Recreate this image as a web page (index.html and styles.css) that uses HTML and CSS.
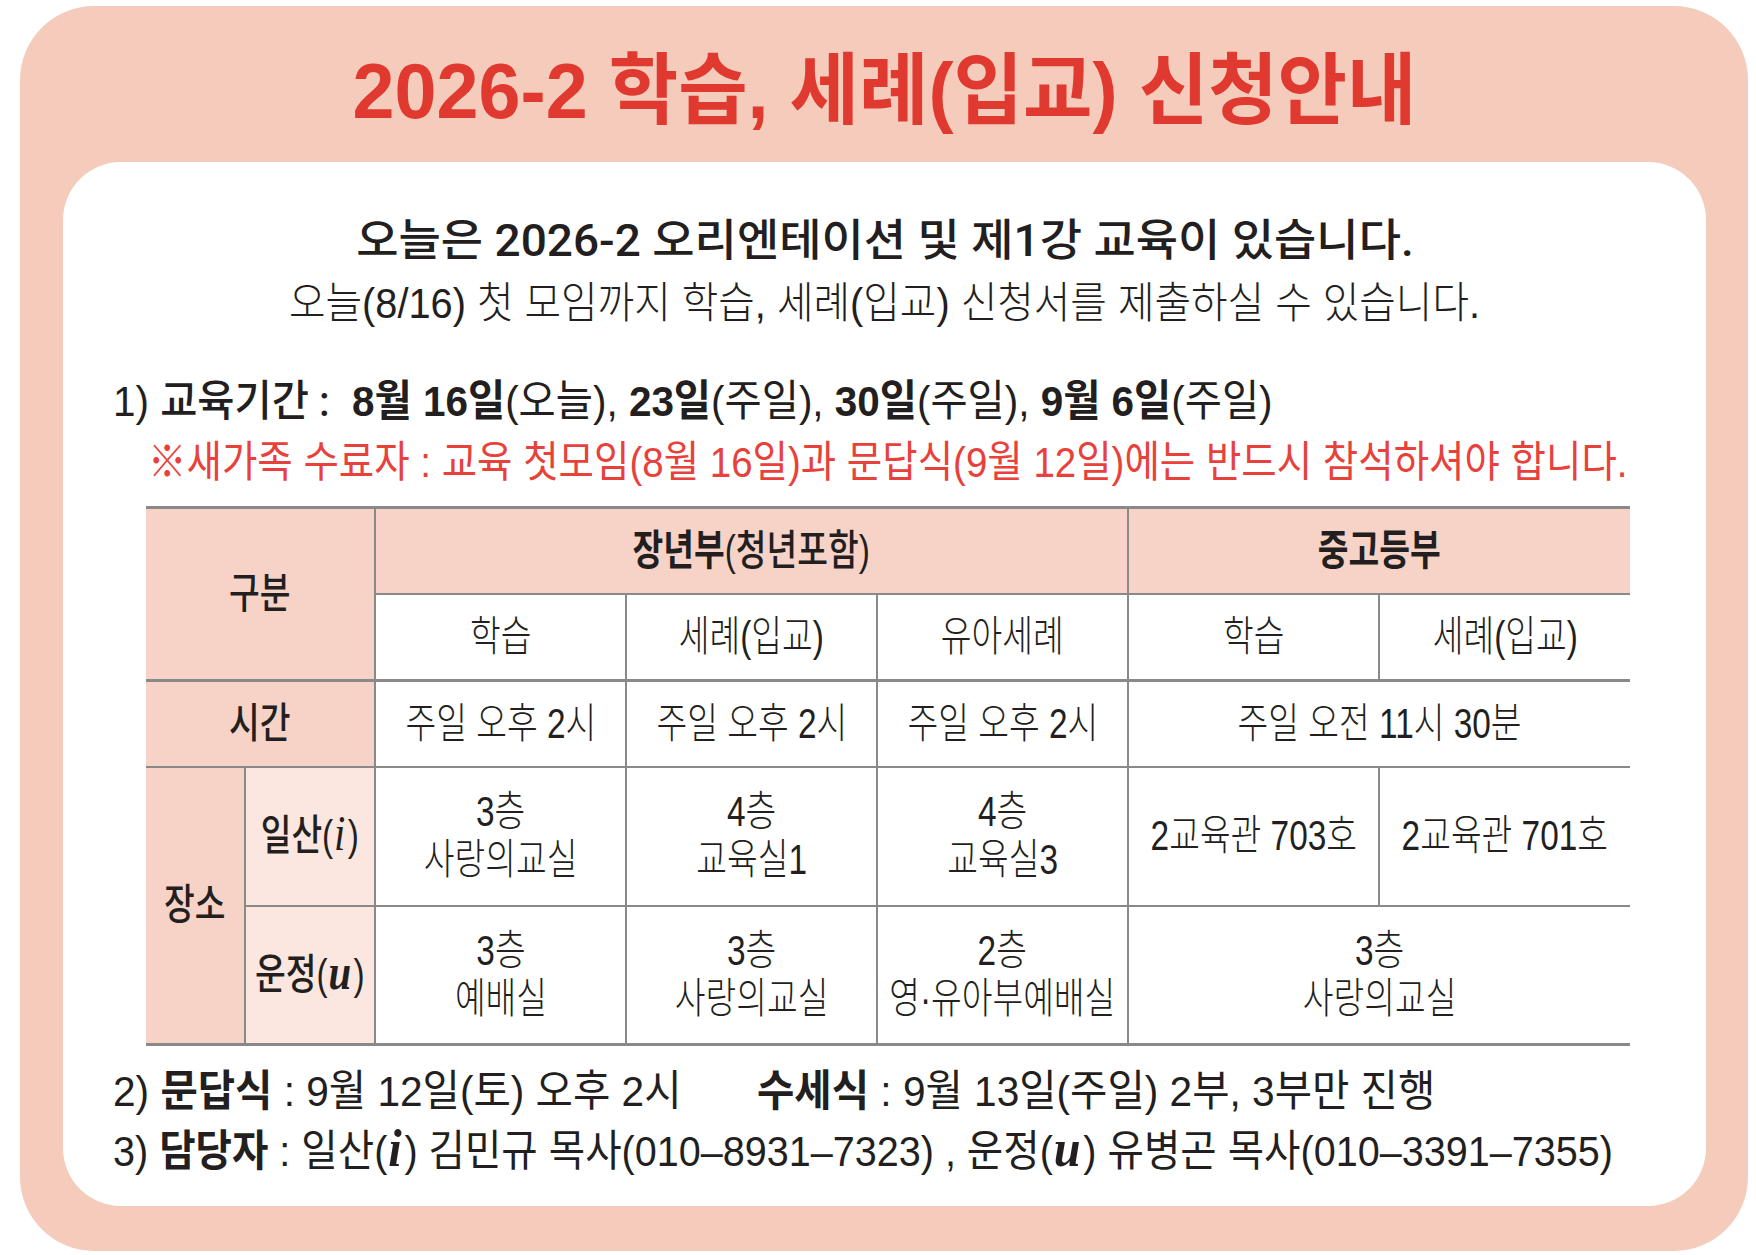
FILE: index.html
```html
<!DOCTYPE html>
<html lang="ko">
<head>
<meta charset="utf-8">
<title>2026-2 학습, 세례(입교) 신청안내</title>
<link rel="stylesheet" href="styles.css">
</head>
<body>
<div class="card">
  <h1 class="title"><span class="sx">2026-2 학습, 세례(입교) 신청안내</span></h1>
  <div class="panel">
    <p class="line lead"><span class="sx">오늘은 2026-2 오리엔테이션 및 제1강 교육이 있습니다.</span></p>
    <p class="line sub"><span class="sx">오늘(8/16) 첫 모임까지 학습, 세례(입교) 신청서를 제출하실 수 있습니다.</span></p>
    <p class="line item item1"><span class="sx">1) <b class="lbl">교육기간 :</b>&nbsp; <b>8월 16일</b>(오늘), <b>23일</b>(주일), <b>30일</b>(주일), <b>9월 6일</b>(주일)</span></p>
    <p class="line note"><span class="sx">※새가족 수료자 : 교육 첫모임(8월 16일)과 문답식(9월 12일)에는 반드시 참석하셔야 합니다.</span></p>

    <table class="sched">
      <colgroup>
        <col class="ca"><col class="cb"><col class="cd"><col class="cd"><col class="cd"><col class="cd"><col class="cd">
      </colgroup>
      <tr class="r-h1">
        <th colspan="2" rowspan="2" class="hd nl"><div class="cx"><span class="sx">구분</span></div></th>
        <th colspan="3" class="hd"><div class="cx"><span class="sx"><b>장년부</b>(청년포함)</span></div></th>
        <th colspan="2" class="hd nr"><div class="cx"><span class="sx"><b>중고등부</b></span></div></th>
      </tr>
      <tr class="r-h2">
        <td><div class="cx"><span class="sx">학습</span></div></td>
        <td><div class="cx"><span class="sx">세례(입교)</span></div></td>
        <td><div class="cx"><span class="sx">유아세례</span></div></td>
        <td><div class="cx"><span class="sx">학습</span></div></td>
        <td class="nr"><div class="cx"><span class="sx">세례(입교)</span></div></td>
      </tr>
      <tr class="r-time">
        <th colspan="2" class="hd nl"><div class="cx"><span class="sx">시간</span></div></th>
        <td><div class="cx"><span class="sx">주일 오후 2시</span></div></td>
        <td><div class="cx"><span class="sx">주일 오후 2시</span></div></td>
        <td><div class="cx"><span class="sx">주일 오후 2시</span></div></td>
        <td colspan="2" class="nr"><div class="cx"><span class="sx">주일 오전 11시 30분</span></div></td>
      </tr>
      <tr class="r-place">
        <th rowspan="2" class="hd nl"><div class="cx"><span class="sx">장소</span></div></th>
        <th class="hd2"><div class="cx"><span class="sx">일산(<i class="it">i</i>)</span></div></th>
        <td><div class="cx"><span class="sx">3층<br>사랑의교실</span></div></td>
        <td><div class="cx"><span class="sx">4층<br>교육실1</span></div></td>
        <td><div class="cx"><span class="sx">4층<br>교육실3</span></div></td>
        <td><div class="cx"><span class="sx">2교육관 703호</span></div></td>
        <td class="nr"><div class="cx"><span class="sx">2교육관 701호</span></div></td>
      </tr>
      <tr class="r-place">
        <th class="hd2"><div class="cx"><span class="sx">운정(<i class="it itb">u</i>)</span></div></th>
        <td><div class="cx"><span class="sx">3층<br>예배실</span></div></td>
        <td><div class="cx"><span class="sx">3층<br>사랑의교실</span></div></td>
        <td><div class="cx"><span class="sx">2층<br>영·유아부예배실</span></div></td>
        <td colspan="2" class="nr"><div class="cx"><span class="sx">3층<br>사랑의교실</span></div></td>
      </tr>
    </table>

    <p class="line item item2"><span class="sx">2) <b>문답식</b> : 9월 12일(토) 오후 2시<span class="gap"></span><b>수세식</b> : 9월 13일(주일) 2부, 3부만 진행</span></p>
    <p class="line item item3"><span class="sx">3) <b>담당자</b> : 일산(<i class="it itb">i</i>) 김민규 목사(010–8931–7323) , 운정(<i class="it itb">u</i>) 유병곤 목사(010–3391–7355)</span></p>
  </div>
</div>
</body>
</html>
```

FILE: styles.css
```css
* {
  box-sizing: border-box;
}

html,
body {
  margin: 0;
  padding: 0;
  background: #ffffff;
}

body {
  width: 1756px;
  height: 1255px;
  overflow: hidden;
  font-family: "Liberation Sans", "Noto Sans CJK KR", "Noto Sans", sans-serif;
  color: #231f20;
}

.sx {
  display: inline-block;
  white-space: nowrap;
  transform-origin: left center;
}

.card {
  margin: 6px 0 0 20px;
  width: 1728px;
  height: 1245px;
  background: #f5cbbb;
  border-radius: 74px;
  padding: 35px 42px 0 43px;
}

.title {
  margin: 0;
  height: 100px;
  line-height: 100px;
  font-size: 78px;
  font-weight: 700;
  color: #e0392f;
  text-align: center;
  white-space: nowrap;
}

.title .sx {
  transform: scaleX(0.968);
  transform-origin: center center;
}

.panel {
  margin-top: 21px;
  background: #ffffff;
  border-radius: 58px;
  padding: 51px 0 27px 0;
}

.line {
  margin: 0;
  font-size: 43px;
  line-height: 56px;
  white-space: nowrap;
}

.lead {
  text-align: center;
  font-family: "Roboto", "Noto Sans CJK KR", sans-serif;
  font-weight: 500;
  font-size: 44px;
}

.lead .sx {
  transform: scaleX(1.045);
  transform-origin: center center;
}

.sub {
  margin-top: 6px;
  text-align: center;
  font-weight: 300;
}

.sub .sx {
  transform: scaleX(0.924);
  transform-origin: center center;
}

.item {
  margin-left: 50px;
}

.item b {
  font-weight: 700;
}

.item1 {
  margin-top: 42px;
}

.item1 .sx {
  transform: scaleX(0.94);
}

.item1 .lbl {
  font-family: "Roboto", "Noto Sans CJK KR", sans-serif;
  font-weight: 500;
}

.note {
  margin-top: 5px;
  margin-left: 85px;
  color: #e8413b;
}

.note .sx {
  transform: scaleX(0.895);
}

.item2 {
  margin-top: 17px;
}

.item2 .sx {
  transform: scaleX(0.944);
}

.item3 {
  margin-top: 4px;
}

.item3 .sx {
  transform: scaleX(0.92);
}

.gap {
  display: inline-block;
  width: 80px;
}

.it {
  font-family: "Liberation Serif", "DejaVu Serif", serif;
  font-style: italic;
  font-size: 1.22em;
  line-height: 0;
  font-weight: 400;
  padding: 0 3px 0 1px;
}

.itb {
  font-weight: 700;
}

/* table */
.sched {
  margin: 16px 0 0 83px;
  width: 1484px;
  border-collapse: collapse;
  table-layout: fixed;
  font-size: 42px;
  line-height: 48px;
  border-top: 3px solid #898989;
  border-bottom: 3px solid #898989;
}

.sched .ca {
  width: 99px;
}

.sched .cb {
  width: 130px;
}

.sched .cd {
  width: 251px;
}

.sched th,
.sched td {
  padding: 0;
  border: 2px solid #898989;
  text-align: center;
  vertical-align: middle;
  font-weight: 300;
  overflow: visible;
}

.sched .nl {
  border-left: none;
}

.sched .nr {
  border-right: none;
}

.sched .hd {
  background: #f6d3c6;
  font-weight: 500;
}

.sched .hd2 {
  background: #fbe7df;
  font-weight: 500;
}

.sched b {
  font-weight: 700;
}

.sched .cx {
  display: flex;
  justify-content: center;
  align-items: center;
}

.sched .sx {
  transform: scaleX(0.795);
  transform-origin: center center;
}

.r-h1 {
  height: 86px;
}

.r-h2 {
  height: 87px;
}

.r-time {
  height: 86px;
}

.r-time > th,
.r-time > td {
  border-top-width: 3px;
}

.r-place {
  height: 139px;
}
```
